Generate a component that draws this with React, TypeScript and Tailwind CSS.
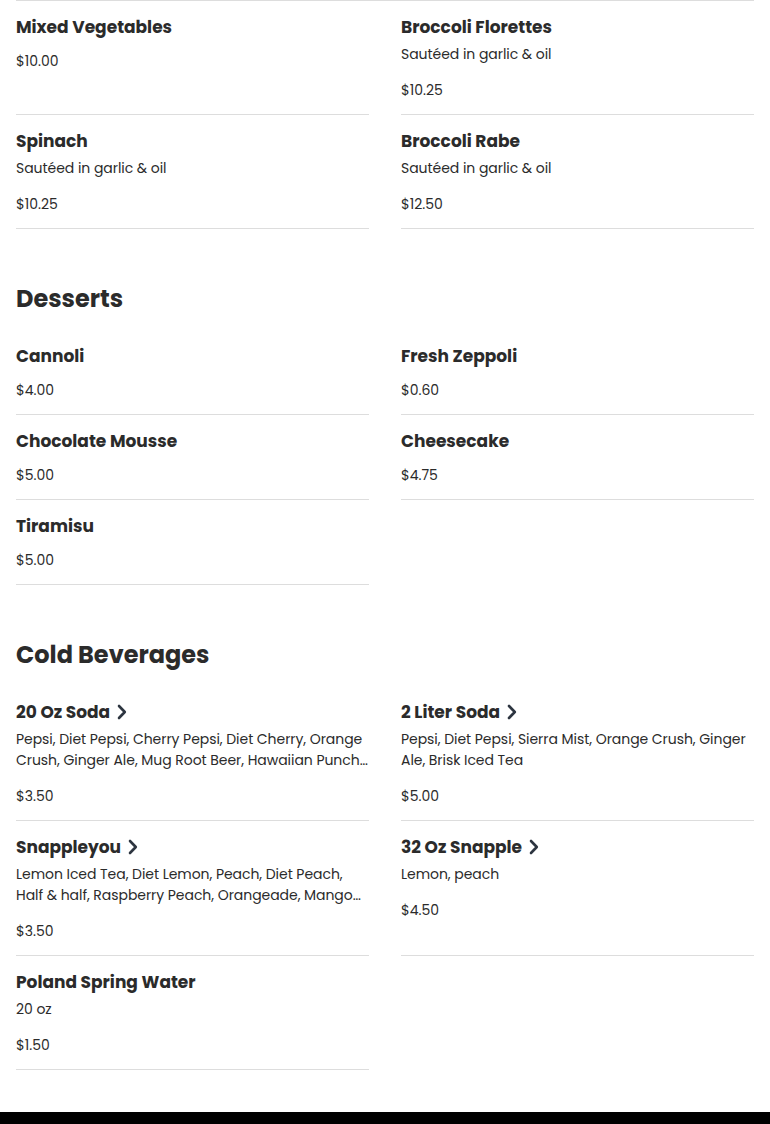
// @ts-nocheck
import React from 'react';

type Item = { name: string; desc?: string; price: string; more?: boolean };

const sections: { title?: string; items: Item[] }[] = [
  {
    items: [
      { name: 'Mixed Vegetables', price: '$10.00' },
      { name: 'Broccoli Florettes', desc: 'Sautéed in garlic & oil', price: '$10.25' },
      { name: 'Spinach', desc: 'Sautéed in garlic & oil', price: '$10.25' },
      { name: 'Broccoli Rabe', desc: 'Sautéed in garlic & oil', price: '$12.50' },
    ],
  },
  {
    title: 'Desserts',
    items: [
      { name: 'Cannoli', price: '$4.00' },
      { name: 'Fresh Zeppoli', price: '$0.60' },
      { name: 'Chocolate Mousse', price: '$5.00' },
      { name: 'Cheesecake', price: '$4.75' },
      { name: 'Tiramisu', price: '$5.00' },
    ],
  },
  {
    title: 'Cold Beverages',
    items: [
      {
        name: '20 Oz Soda',
        more: true,
        desc: 'Pepsi, Diet Pepsi, Cherry Pepsi, Diet Cherry, Orange Crush, Ginger Ale, Mug Root Beer, Hawaiian Punch, Brisk Iced Tea, Sierra Mist',
        price: '$3.50',
      },
      {
        name: '2 Liter Soda',
        more: true,
        desc: 'Pepsi, Diet Pepsi, Sierra Mist, Orange Crush, Ginger Ale, Brisk Iced Tea',
        price: '$5.00',
      },
      {
        name: 'Snappleyou',
        more: true,
        desc: 'Lemon Iced Tea, Diet Lemon, Peach, Diet Peach, Half & half, Raspberry Peach, Orangeade, Mango Madness, Kiwi Strawberry',
        price: '$3.50',
      },
      { name: '32 Oz Snapple', more: true, desc: 'Lemon, peach', price: '$4.50' },
      { name: 'Poland Spring Water', desc: '20 oz', price: '$1.50' },
    ],
  },
];

const Chevron = () => (
  <svg width="10" height="16" viewBox="0 0 10 16" className="ml-[7px] shrink-0" fill="none">
    <path d="M2 2 L7.8 8 L2 14" stroke="#2d3540" strokeWidth="2.6" strokeLinecap="round" strokeLinejoin="round" />
  </svg>
);

const MenuItem = ({ item }: { item: Item }) => (
  <div className="border-b border-[#dddddd] pt-[15px] pb-[13px]">
    <div className="flex items-center h-[22px]">
      <span className="text-[17px] font-bold leading-[22px] text-[#2b2b2b]">{item.name}</span>
      {item.more && <Chevron />}
    </div>
    {item.desc && (
      <p className="mt-[6px] text-[14px] leading-[21px] text-[#2b2b2b] line-clamp-2 tracking-[-0.05px]">{item.desc}</p>
    )}
    <div className={`${item.desc ? 'mt-[15px]' : 'mt-[13px]'} text-[14px] leading-[21px] text-[#2b2b2b]`}>{item.price}</div>
  </div>
);

export default function App() {
  return (
    <div className="bg-white min-h-screen" style={{ fontFamily: 'Poppins, Inter, "Noto Sans", sans-serif' }}>
      <div className="px-4">
        {sections.map((s, i) => (
          <section key={i} className={s.title ? 'pt-[54px]' : ''}>
            {s.title && (
              <h2 className="text-[24px] font-bold leading-[32px] mb-[15px] text-[#2b2b2b]">{s.title}</h2>
            )}
            <div className={`grid grid-cols-2 gap-x-8 ${s.title ? '' : 'border-t border-[#dddddd]'}`}>
              {s.items.map((it) => (
                <MenuItem key={it.name} item={it} />
              ))}
            </div>
          </section>
        ))}
      </div>
      <div className="h-[42px]" />
      <footer className="bg-black h-[200px]" />
    </div>
  );
}
